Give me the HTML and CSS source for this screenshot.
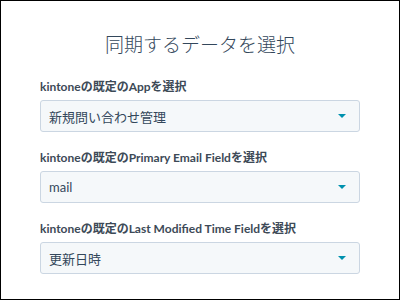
FILE: index.html
```html
<!DOCTYPE html>
<html lang="ja">
<head>
  <meta charset="UTF-8">
  <title>同期するデータを選択</title>
  <link rel="stylesheet" href="styles.css">
</head>
<body>
  <div class="frame">
    <h1 class="title">同期するデータを選択</h1>
    <div class="fields">
      <div class="field">
        <label class="label">kintoneの既定のAppを選択</label>
        <div class="select">
          <span>新規問い合わせ管理</span>
          <i class="caret"></i>
        </div>
      </div>
      <div class="field">
        <label class="label">kintoneの既定のPrimary Email Fieldを選択</label>
        <div class="select">
          <span>mail</span>
          <i class="caret"></i>
        </div>
      </div>
      <div class="field">
        <label class="label">kintoneの既定のLast Modified Time Fieldを選択</label>
        <div class="select">
          <span>更新日時</span>
          <i class="caret"></i>
        </div>
      </div>
    </div>
  </div>
</body>
</html>
```

FILE: styles.css
```css
html, body {
  margin: 0;
  padding: 0;
  background: #fff;
}
.frame {
  box-sizing: border-box;
  width: 400px;
  height: 300px;
  border: 1px solid #000;
  padding: 0 39px;
  font-family: "Lato", "Noto Sans CJK JP", sans-serif;
  color: #33475b;
}
.title {
  margin: 0;
  padding-top: 30px;
  height: 78px;
  box-sizing: border-box;
  text-align: center;
  font-family: "Noto Sans CJK JP", sans-serif;
  font-weight: 300;
  font-size: 19px;
  line-height: 26px;
  color: #33475b;
}
.fields {
  display: flex;
  flex-direction: column;
  gap: 18px;
}
.field {
  display: flex;
  flex-direction: column;
  gap: 5px;
}
.label {
  font-size: 12px;
  font-weight: 700;
  line-height: 16px;
  color: #3d4a57;
}
.select {
  box-sizing: border-box;
  height: 32px;
  border: 1px solid #cbd6e2;
  border-radius: 3px;
  background: #f5f8fa;
  display: flex;
  align-items: center;
  justify-content: space-between;
  padding: 0 13px 0 8px;
  font-size: 13px;
  color: #33475b;
}
.caret {
  width: 0;
  height: 0;
  border-left: 4px solid transparent;
  border-right: 4px solid transparent;
  border-top: 4px solid #0091ae;
}
```
